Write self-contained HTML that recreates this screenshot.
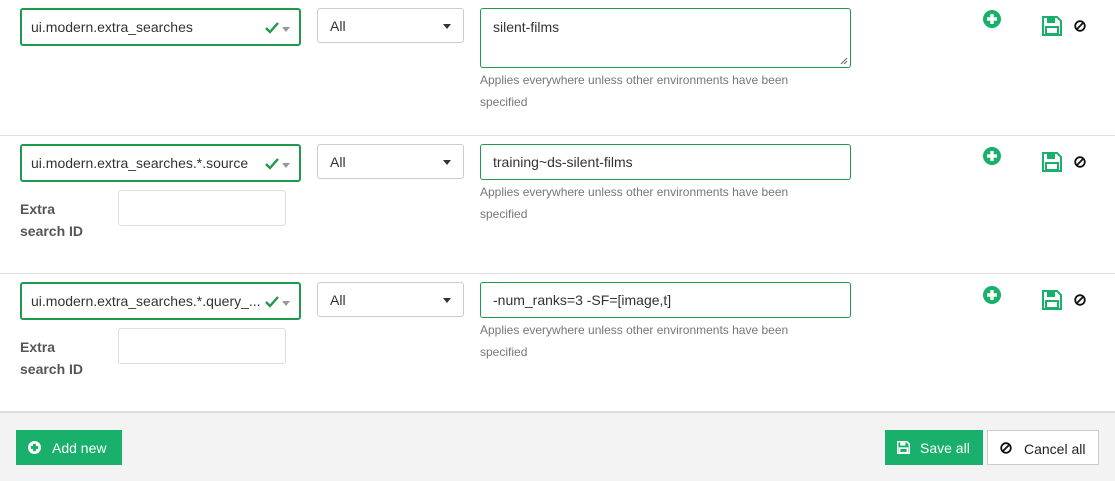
<!DOCTYPE html><html><head><style>
*{box-sizing:border-box;margin:0;padding:0}
body{width:1115px;height:481px;position:relative;background:#fff;font-family:"Liberation Sans","DejaVu Sans",sans-serif;font-size:14px;color:#333;overflow:hidden}
.a{position:absolute}
.key{border:2px solid #1e9a4a;border-radius:3px;height:38px;width:281px;left:20px;padding:9px 0 0 9px;font-size:14px;white-space:nowrap;overflow:hidden}
.key .ck{position:absolute;right:8px;top:6px}
.sel{left:317px;width:147px;height:35px;border:1px solid #ccc;border-radius:3px;padding:9px 0 0 12px}
.sel:after{content:"";position:absolute;right:12px;top:15px;border:4px solid transparent;border-top:5px solid #333}
.ta{left:480px;width:371px;border:1px solid #1e9a4a;border-radius:3px;padding:10px 12px}
.help{left:480px;font-size:12px;color:#777;line-height:22px;width:340px}
.lbl{left:20px;font-weight:bold;color:#555;line-height:22px}
.inp{left:118px;width:168px;height:36px;border:1px solid #ddd;border-radius:3px}
.hr{left:0;width:1115px;height:1px;background:#ddd}
.btn{height:35px;top:430px;padding:10px 0 0 0;font-size:14px}
</style></head><body>
<svg width="0" height="0" style="position:absolute"><defs>
<g id="plus"><circle cx="9" cy="9" r="9" fill="#18b06b"/><rect x="4" y="7.3" width="10" height="3.4" fill="#fff"/><rect x="7.3" y="4" width="3.4" height="10" fill="#fff"/></g>
<g id="save"><path d="M1 1h14l4 4v14H1z" fill="none" stroke="#18b06b" stroke-width="2"/><rect x="5" y="2" width="8" height="5" fill="#18b06b"/><rect x="4" y="11" width="12" height="7" fill="none" stroke="#18b06b" stroke-width="2"/></g>
<g id="ban"><circle cx="6" cy="6" r="4.8" fill="none" stroke="#111" stroke-width="1.8"/><path d="M2.8 9.2L9.2 2.8" stroke="#111" stroke-width="1.8"/></g>
<g id="ck"><path d="M1 7l4 4 8-9" fill="none" stroke="#1e9a4a" stroke-width="2.4"/><path d="M17 6h8l-4 5z" fill="#999"/></g>
</defs></svg>

<!-- row 1 -->
<div class="a key" style="top:8px">ui.modern.extra_searches<svg class="ck" width="26" height="14" style="top:11px"><use href="#ck"/></svg></div>
<div class="a sel" style="top:8px">All</div>
<div class="a ta" style="top:8px;height:60px">silent-films</div>
<svg class="a" style="left:840px;top:57px" width="8" height="8"><path d="M1 7L7 1M4 7L7 4" stroke="#666" stroke-width="1"/></svg>
<div class="a help" style="top:69px">Applies everywhere unless other environments have been specified</div>
<svg class="a" style="left:983px;top:10px" width="18" height="18"><use href="#plus"/></svg>
<svg class="a" style="left:1042px;top:16px" width="20" height="20"><use href="#save"/></svg>
<svg class="a" style="left:1074px;top:20px" width="12" height="12"><use href="#ban"/></svg>
<div class="a hr" style="top:135px"></div>

<!-- row 2 -->
<div class="a key" style="top:144px">ui.modern.extra_searches.*.source<svg class="ck" width="26" height="14" style="top:11px"><use href="#ck"/></svg></div>
<div class="a sel" style="top:144px">All</div>
<div class="a ta" style="top:144px;height:36px;padding-top:9px">training~ds-silent-films</div>
<div class="a help" style="top:181px">Applies everywhere unless other environments have been specified</div>
<div class="a lbl" style="top:198px">Extra<br>search ID</div>
<div class="a inp" style="top:190px"></div>
<svg class="a" style="left:983px;top:147px" width="18" height="18"><use href="#plus"/></svg>
<svg class="a" style="left:1042px;top:152px" width="20" height="20"><use href="#save"/></svg>
<svg class="a" style="left:1074px;top:156px" width="12" height="12"><use href="#ban"/></svg>
<div class="a hr" style="top:273px"></div>

<!-- row 3 -->
<div class="a key" style="top:282px">ui.modern.extra_searches.*.query_...<svg class="ck" width="26" height="14" style="top:11px;background:#fff"><use href="#ck"/></svg></div>
<div class="a sel" style="top:282px">All</div>
<div class="a ta" style="top:282px;height:36px;padding-top:9px">-num_ranks=3 -SF=[image,t]</div>
<div class="a help" style="top:319px">Applies everywhere unless other environments have been specified</div>
<div class="a lbl" style="top:336px">Extra<br>search ID</div>
<div class="a inp" style="top:328px"></div>
<svg class="a" style="left:983px;top:286px" width="18" height="18"><use href="#plus"/></svg>
<svg class="a" style="left:1042px;top:290px" width="20" height="20"><use href="#save"/></svg>
<svg class="a" style="left:1074px;top:294px" width="12" height="12"><use href="#ban"/></svg>

<!-- footer -->
<div class="a" style="left:0;top:411px;width:1115px;height:70px;background:#f3f3f3;border-top:2px solid #ddd"></div>
<div class="a btn" style="left:16px;width:106px;background:#18b06b;color:#fff;padding-left:36px">Add new</div>
<svg class="a" style="left:28px;top:441px" width="13" height="13" viewBox="0 0 18 18"><circle cx="9" cy="9" r="9" fill="#fff"/><rect x="4" y="7" width="10" height="4" fill="#18b06b"/><rect x="7" y="4" width="4" height="10" fill="#18b06b"/></svg>
<div class="a btn" style="left:885px;width:98px;background:#18b06b;color:#fff;padding-left:35px">Save all</div>
<svg class="a" style="left:897px;top:441px" width="13" height="13" viewBox="0 0 20 20"><path d="M1 1h14l4 4v14H1z" fill="none" stroke="#fff" stroke-width="2.4"/><rect x="5" y="2" width="8" height="5" fill="#fff"/><rect x="4" y="11" width="12" height="7" fill="none" stroke="#fff" stroke-width="2.4"/></svg>
<div class="a btn" style="left:987px;width:112px;background:#fff;border:1px solid #ccc;padding-left:36px;color:#222">Cancel all</div>
<svg class="a" style="left:1000px;top:442px" width="12" height="12"><use href="#ban"/></svg>
</body></html>
